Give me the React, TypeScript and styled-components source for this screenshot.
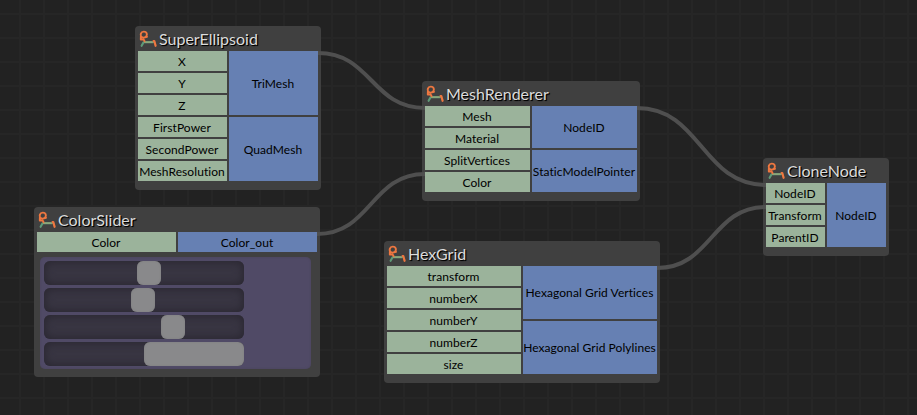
import React from 'react';
import styled, { createGlobalStyle } from 'styled-components';

const GlobalStyle = createGlobalStyle`
  body { margin: 0; background: #222222; overflow: hidden; }
  * { box-sizing: border-box; }
`;

const Canvas = styled.main`
  position: relative;
  width: 917px;
  height: 415px;
  overflow: hidden;
  background-color: #222222;
  background-image:
    linear-gradient(to right, #262626 2px, transparent 2px),
    linear-gradient(to bottom, #262626 2px, transparent 2px);
  background-size: 24px 24px;
  background-position: 19px 13px;
  font-family: Lato, "Liberation Sans", sans-serif;
`;

const NodeBox = styled.section<{ $x: number; $y: number; $w: number }>`
  position: absolute;
  left: ${(p) => p.$x}px;
  top: ${(p) => p.$y}px;
  width: ${(p) => p.$w}px;
  padding: 0 3px 9px;
  border-radius: 4px;
  background: #404040;
`;

const Header = styled.header`
  display: flex;
  align-items: center;
  height: 25px;
  gap: 2px;
  padding-left: 1px;
`;

const Title = styled.h2`
  margin: 0;
  font-size: 16px;
  font-weight: 400;
  line-height: 22px;
  color: #dcdcdc;
  text-shadow: 1px 1px 1px #000, 1px 1px 0 #111;
  white-space: nowrap;
`;

const Ports = styled.div`
  display: grid;
  grid-template-columns: 1fr 1fr;
  gap: 2px;
`;

const PortColumn = styled.div`
  display: flex;
  flex-direction: column;
  gap: 2px;
  min-width: 0;
`;

const Port = styled.div<{ $kind: 'in' | 'out' }>`
  display: flex;
  flex: 1 0 20px;
  align-items: center;
  justify-content: center;
  background: ${(p) => (p.$kind === 'in' ? '#9bb39b' : '#6680b3')};
  color: #000;
  font-size: 12px;
  letter-spacing: 0.07px;
  line-height: 18px;
  padding: 1px 1px 0 0;
  white-space: nowrap;
`;

const SliderPanel = styled.div`
  display: flex;
  flex-direction: column;
  gap: 3px;
  width: 271px;
  height: 112px;
  margin: 5px 0 -1px 3px;
  padding: 4px 4px;
  border-radius: 5px;
  background: #504a66;
  box-shadow: inset 0 0 2px #484359;
`;

const Track = styled.div`
  width: 200px;
  height: 24px;
  flex: none;
  border-radius: 6px;
  background: #383542;
  box-shadow: inset 0 0 8px 1px #292630;
`;

const Thumb = styled.div<{ $start: number; $size: number }>`
  width: ${(p) => p.$size}px;
  height: 24px;
  margin-left: ${(p) => p.$start}px;
  border-radius: 6px;
  background: #89898b;
  box-shadow: inset 0 0 2px #7c7c7e;
`;

const Wires = styled.svg`
  position: absolute;
  inset: 0;
  pointer-events: none;
`;

const NodeIcon = () => (
  <svg width="18" height="18" viewBox="0 0 18 18" fill="none" strokeLinecap="round" strokeLinejoin="round">
    <path d="M2.6 15.8L4.6 12.2H14" stroke="#5f9a78" strokeWidth="2.1" />
    <path d="M6 12.2H13" stroke="#8ba67a" strokeWidth="1.8" />
    <path d="M5 7.6C7.4 7 8.4 5.2 7.6 3.2C6.7 1 2.8 1 1.9 3.6C1.1 6 2.6 7.7 5 7.6L8 6.8M1.9 6L1.8 9.6L4.6 9.4L5.6 11.2" stroke="#ee7740" strokeWidth="1.9" />
    <path d="M14.6 11H15.3L16.6 15.8" stroke="#ee7740" strokeWidth="2.2" />
  </svg>
);

type NodeSpec = {
  title: string;
  x: number;
  y: number;
  w: number;
  inputs: string[];
  outputs: string[];
  sliders?: { start: number; size: number }[];
};

const nodes: NodeSpec[] = [
  {
    title: 'SuperEllipsoid', x: 135, y: 26, w: 186,
    inputs: ['X', 'Y', 'Z', 'FirstPower', 'SecondPower', 'MeshResolution'],
    outputs: ['TriMesh', 'QuadMesh'],
  },
  {
    title: 'MeshRenderer', x: 422, y: 81, w: 218,
    inputs: ['Mesh', 'Material', 'SplitVertices', 'Color'],
    outputs: ['NodeID', 'StaticModelPointer'],
  },
  {
    title: 'CloneNode', x: 763, y: 158, w: 126,
    inputs: ['NodeID', 'Transform', 'ParentID'],
    outputs: ['NodeID'],
  },
  {
    title: 'ColorSlider', x: 34, y: 207, w: 286,
    inputs: ['Color'],
    outputs: ['Color_out'],
    sliders: [
      { start: 93, size: 24 },
      { start: 87, size: 24 },
      { start: 117, size: 24 },
      { start: 100, size: 100 },
    ],
  },
  {
    title: 'HexGrid', x: 384, y: 241, w: 276,
    inputs: ['transform', 'numberX', 'numberY', 'numberZ', 'size'],
    outputs: ['Hexagonal Grid Vertices', 'Hexagonal Grid Polylines'],
  },
];

const wires = [
  [318, 53, 425, 108],
  [317, 234, 425, 174],
  [637, 108, 766, 185],
  [657, 268, 766, 207],
];

const wirePath = ([x1, y1, x2, y2]: number[]) => {
  const mid = (x1 + x2) / 2;
  return `M${x1} ${y1}C${mid} ${y1} ${mid} ${y2} ${x2} ${y2}`;
};

const GraphNode = ({ node }: { node: NodeSpec }) => (
  <NodeBox $x={node.x} $y={node.y} $w={node.w}>
    <Header>
      <NodeIcon />
      <Title>{node.title}</Title>
    </Header>
    <Ports>
      <PortColumn>
        {node.inputs.map((name) => <Port key={name} $kind="in">{name}</Port>)}
      </PortColumn>
      <PortColumn>
        {node.outputs.map((name) => <Port key={name} $kind="out">{name}</Port>)}
      </PortColumn>
    </Ports>
    {node.sliders && (
      <SliderPanel>
        {node.sliders.map((s) => (
          <Track key={s.start}><Thumb $start={s.start} $size={s.size} /></Track>
        ))}
      </SliderPanel>
    )}
  </NodeBox>
);

export default function App() {
  return (
    <>
      <GlobalStyle />
      <Canvas>
        {nodes.map((node) => <GraphNode key={node.title} node={node} />)}
        <Wires width="917" height="415" fill="none" stroke="#4f4f4f" strokeWidth="4">
          {wires.map((w) => <path key={w.join()} d={wirePath(w)} />)}
        </Wires>
      </Canvas>
    </>
  );
}
